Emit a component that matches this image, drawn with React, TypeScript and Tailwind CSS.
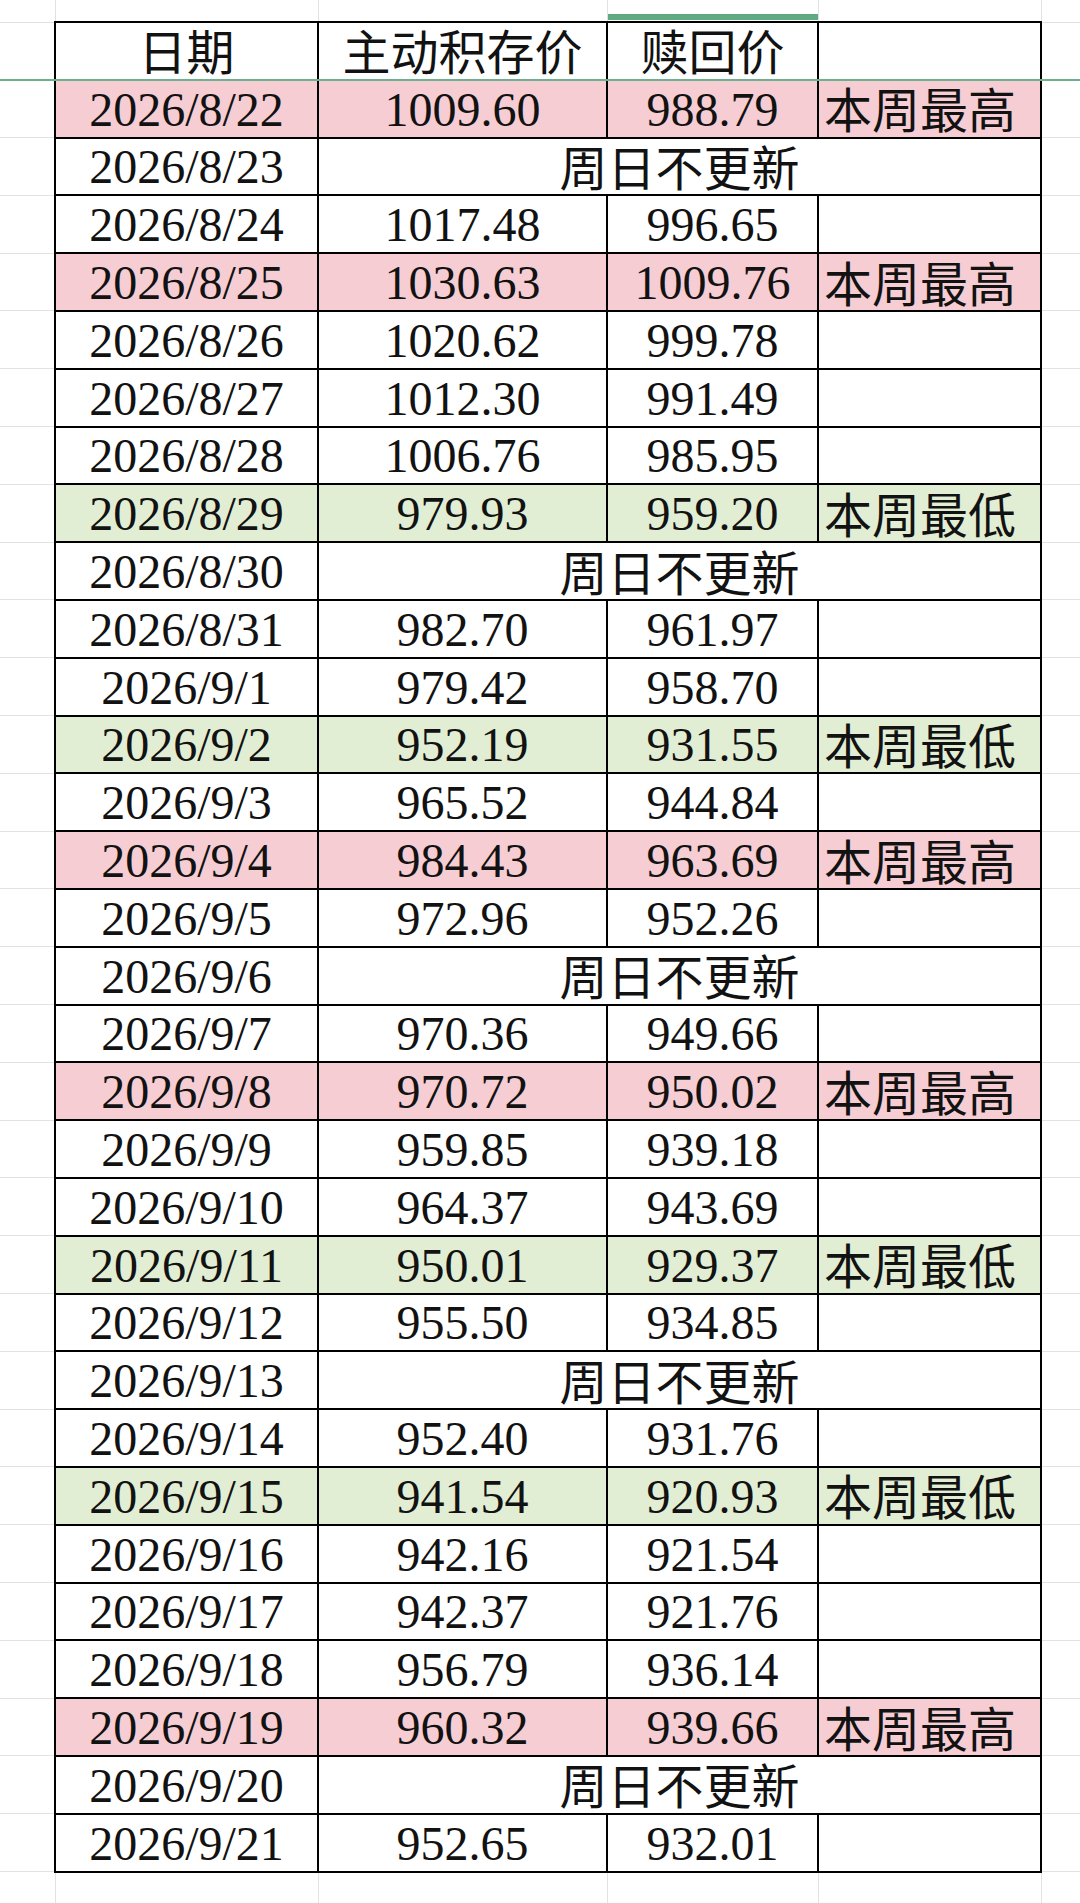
import React from "react";

type Row =
  | { d: string; a: string; b: string; note?: string; tone?: "hi" | "lo" }
  | { d: string; sunday: true };

const rows: Row[] = [
  { d: "2026/8/22", a: "1009.60", b: "988.79", note: "本周最高", tone: "hi" },
  { d: "2026/8/23", sunday: true },
  { d: "2026/8/24", a: "1017.48", b: "996.65" },
  { d: "2026/8/25", a: "1030.63", b: "1009.76", note: "本周最高", tone: "hi" },
  { d: "2026/8/26", a: "1020.62", b: "999.78" },
  { d: "2026/8/27", a: "1012.30", b: "991.49" },
  { d: "2026/8/28", a: "1006.76", b: "985.95" },
  { d: "2026/8/29", a: "979.93", b: "959.20", note: "本周最低", tone: "lo" },
  { d: "2026/8/30", sunday: true },
  { d: "2026/8/31", a: "982.70", b: "961.97" },
  { d: "2026/9/1", a: "979.42", b: "958.70" },
  { d: "2026/9/2", a: "952.19", b: "931.55", note: "本周最低", tone: "lo" },
  { d: "2026/9/3", a: "965.52", b: "944.84" },
  { d: "2026/9/4", a: "984.43", b: "963.69", note: "本周最高", tone: "hi" },
  { d: "2026/9/5", a: "972.96", b: "952.26" },
  { d: "2026/9/6", sunday: true },
  { d: "2026/9/7", a: "970.36", b: "949.66" },
  { d: "2026/9/8", a: "970.72", b: "950.02", note: "本周最高", tone: "hi" },
  { d: "2026/9/9", a: "959.85", b: "939.18" },
  { d: "2026/9/10", a: "964.37", b: "943.69" },
  { d: "2026/9/11", a: "950.01", b: "929.37", note: "本周最低", tone: "lo" },
  { d: "2026/9/12", a: "955.50", b: "934.85" },
  { d: "2026/9/13", sunday: true },
  { d: "2026/9/14", a: "952.40", b: "931.76" },
  { d: "2026/9/15", a: "941.54", b: "920.93", note: "本周最低", tone: "lo" },
  { d: "2026/9/16", a: "942.16", b: "921.54" },
  { d: "2026/9/17", a: "942.37", b: "921.76" },
  { d: "2026/9/18", a: "956.79", b: "936.14" },
  { d: "2026/9/19", a: "960.32", b: "939.66", note: "本周最高", tone: "hi" },
  { d: "2026/9/20", sunday: true },
  { d: "2026/9/21", a: "952.65", b: "932.01" },
];

const inner = "border-2 border-black p-0 align-middle whitespace-nowrap";
const outside = "border-y border-[#e2e2e2] p-0";

function Num({ children }: { children: React.ReactNode }) {
  return <span className="font-['Liberation_Serif']">{children}</span>;
}

function Cjk({ children }: { children: React.ReactNode }) {
  return <span className="font-['Noto_Sans_CJK_SC']">{children}</span>;
}

export default function App() {
  return (
    <div className="w-[1080px] h-[1903px] overflow-hidden bg-white text-[#121212]">
      <table className="border-collapse table-fixed w-[1080px] text-[48px] leading-none">
        <colgroup>
          <col className="w-[55px]" />
          <col className="w-[263px]" />
          <col className="w-[289px]" />
          <col className="w-[211px]" />
          <col className="w-[223px]" />
          <col className="w-[39px]" />
        </colgroup>
        <tbody>
          <tr className="h-[22px]">
            <td className="border-r border-b border-[#e2e2e2] p-0" />
            <td className="border-r border-[#e2e2e2] p-0" />
            <td className="border-r border-[#e2e2e2] p-0" />
            <td className="border-r border-[#e2e2e2] p-0 align-bottom">
              <div className="h-[6px] bg-[#5fa983] mb-[1px]" />
            </td>
            <td className="border-r border-[#e2e2e2] p-0" />
            <td className="border-b border-[#e2e2e2] p-0" />
          </tr>
          <tr className="h-[57.8px]">
            <td className="border-t border-[#e2e2e2] border-b-2 border-b-[#6cb08d] p-0" />
            <td className={`${inner} text-center border-b-[#6cb08d]`}>
              <Cjk>日期</Cjk>
            </td>
            <td className={`${inner} text-center border-b-[#6cb08d]`}>
              <Cjk>主动积存价</Cjk>
            </td>
            <td className={`${inner} text-center border-b-[#6cb08d]`}>
              <Cjk>赎回价</Cjk>
            </td>
            <td className={`${inner} text-center border-b-[#6cb08d]`}></td>
            <td className="border-t border-[#e2e2e2] border-b-2 border-b-[#6cb08d] p-0" />
          </tr>
          {rows.map((r) => {
            if ("sunday" in r) {
              return (
                <tr key={r.d} className="h-[57.8px]">
                  <td className={outside} />
                  <td className={`${inner} text-center`}>
                    <Num>{r.d}</Num>
                  </td>
                  <td colSpan={3} className={`${inner} text-center`}>
                    <Cjk>周日不更新</Cjk>
                  </td>
                  <td className={outside} />
                </tr>
              );
            }
            const bg =
              r.tone === "hi" ? "bg-[#f6cdd3]" : r.tone === "lo" ? "bg-[#e2eed4]" : "bg-white";
            return (
              <tr key={r.d} className="h-[57.8px]">
                <td className={outside} />
                <td className={`${inner} text-center ${bg}`}>
                  <Num>{r.d}</Num>
                </td>
                <td className={`${inner} text-center ${bg}`}>
                  <Num>{r.a}</Num>
                </td>
                <td className={`${inner} text-center ${bg}`}>
                  <Num>{r.b}</Num>
                </td>
                <td className={`${inner} text-left pl-[5px] ${bg}`}>
                  {r.note ? <Cjk>{r.note}</Cjk> : null}
                </td>
                <td className={outside} />
              </tr>
            );
          })}
          <tr className="h-[57.8px]">
            <td className="border-r border-b border-[#e2e2e2] p-0" />
            <td className="border-r border-b border-[#e2e2e2] p-0" />
            <td className="border-r border-b border-[#e2e2e2] p-0" />
            <td className="border-r border-b border-[#e2e2e2] p-0" />
            <td className="border-r border-b border-[#e2e2e2] p-0" />
            <td className="border-b border-[#e2e2e2] p-0" />
          </tr>
        </tbody>
      </table>
    </div>
  );
}
